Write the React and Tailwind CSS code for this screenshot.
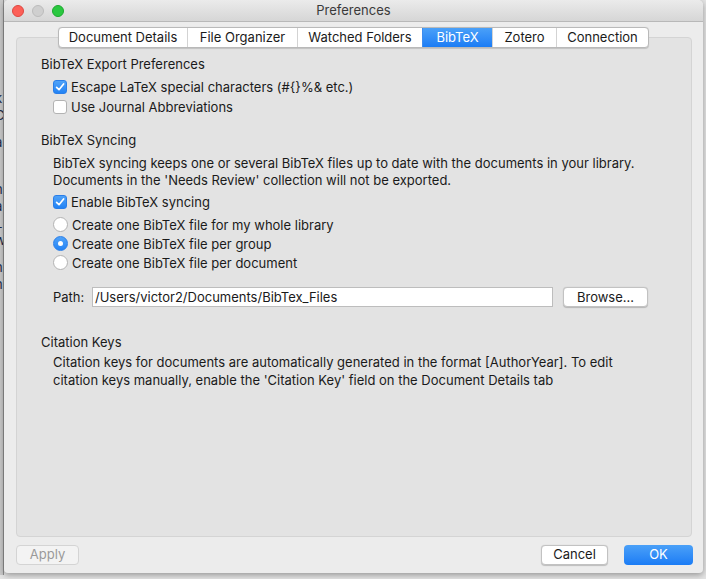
import React from 'react';

const tabs = [
  { label: 'Document Details', w: 'w-[128px]' },
  { label: 'File Organizer', w: 'w-[110px]' },
  { label: 'Watched Folders', w: 'w-[125px]' },
  { label: 'BibTeX', w: 'w-[70px]', active: true },
  { label: 'Zotero', w: 'w-[64px]' },
  { label: 'Connection', w: 'w-[92px]' },
];

const Check = ({ checked }) =>
  checked ? (
    <span className="w-[14px] h-[14px] rounded-[3px] bg-gradient-to-b from-[#4fa2f8] to-[#2183f5] border border-[#2a7ee8] flex items-center justify-center shrink-0">
      <svg width="12" height="12" viewBox="0 0 12 12">
        <path d="M2.6 6.3 L5 8.7 L9.6 3" fill="none" stroke="white" strokeWidth="1.7" strokeLinecap="round" strokeLinejoin="round" />
      </svg>
    </span>
  ) : (
    <span className="w-[14px] h-[14px] rounded-[3px] bg-white border border-[#b3b3b3] shrink-0" />
  );

const Radio = ({ checked }) =>
  checked ? (
    <span className="w-[15px] h-[15px] rounded-full bg-gradient-to-b from-[#4fa2f8] to-[#2183f5] border border-[#2a7ee8] flex items-center justify-center shrink-0">
      <span className="w-[5px] h-[5px] rounded-full bg-white" />
    </span>
  ) : (
    <span className="w-[15px] h-[15px] rounded-full bg-white border border-[#b3b3b3] shrink-0" />
  );

const Row = ({ children, className = '' }) => (
  <div className={`flex items-center gap-[4px] pl-[12px] ${className}`}>{children}</div>
);

export default function App() {
  return (
    <div className="w-[706px] h-[579px] bg-[#e4e4e4] flex overflow-hidden text-[13px] text-[#1a1a1a] font-['Inter',sans-serif]">
      {/* background window peeking out on the left */}
      <div className="w-[4px] h-[575px] bg-[#c9c9c9] border-r border-[#8f8f8f] overflow-hidden flex flex-col pt-[90px] text-[#1d2b4a] leading-[17px] -indent-[5px]">
        <span>k</span><span>C</span><span className="mt-[10px]">a</span>
        <span className="mt-[30px]">n</span><span>a</span><span>L</span><span>w</span>
        <span className="mt-[10px]">n</span><span>n</span>
      </div>

      <div className="w-[699px] h-[573px] bg-[#ececec] rounded-t-[5px] rounded-b-[4px] shadow-[0_2px_6px_rgba(0,0,0,0.35)] flex flex-col">
        {/* title bar */}
        <div className="h-[22px] shrink-0 rounded-t-[5px] bg-gradient-to-b from-[#ebebeb] to-[#d6d6d6] border-b border-[#b8b8b8] flex items-center relative">
          <div className="flex items-center gap-[8px] pl-[8px]">
            <span className="w-[12px] h-[12px] rounded-full bg-[#fc5f57] border border-[#de4740]" />
            <span className="w-[12px] h-[12px] rounded-full bg-[#cfcfcf] border border-[#bcbcbc]" />
            <span className="w-[12px] h-[12px] rounded-full bg-[#2ac840] border border-[#1ca82e]" />
          </div>
          <div className="absolute inset-0 flex items-center justify-center text-[#3a3a3a] pointer-events-none">Preferences</div>
        </div>

        {/* tabs */}
        <div className="flex justify-center pt-[5px] relative z-10">
          <div className="flex h-[21px] rounded-[4px] border border-[#b9b9b9] bg-white overflow-hidden shadow-[0_0.5px_1px_rgba(0,0,0,0.15)]">
            {tabs.map((t, i) => (
              <div
                key={t.label}
                className={`${t.w} flex items-center justify-center ${i > 0 ? 'border-l border-[#d3d3d3]' : ''} ${
                  t.active ? 'bg-gradient-to-b from-[#4aa0f8] to-[#1a7cf5] text-white border-l-[#3d8cef]' : 'text-[#1a1a1a]'
                }`}
              >
                {t.label}
              </div>
            ))}
          </div>
        </div>

        {/* tab box */}
        <div className="mr-[11px] ml-[12px] -mt-[11px] h-[500px] rounded-[4px] bg-[#e3e3e3] border border-[#d4d4d4] pl-[24px] pt-[17px] leading-[18px]">
          <div className="h-[18px] flex items-center">BibTeX Export Preferences</div>
          <Row className="h-[20px] mt-[4px]"><Check checked />Escape LaTeX special characters (#{'{}'}%&amp; etc.)</Row>
          <Row className="h-[20px]"><Check />Use Journal Abbreviations</Row>

          <div className="h-[18px] flex items-center mt-[14px]">BibTeX Syncing</div>
          <div className="pl-[12px] mt-[6px] leading-[17px]">
            <div>BibTeX syncing keeps one or several BibTeX files up to date with the documents in your library.</div>
            <div>Documents in the 'Needs Review' collection will not be exported.</div>
          </div>
          <Row className="h-[20px] mt-[3px]"><Check checked />Enable BibTeX syncing</Row>
          <Row className="h-[19px] mt-[3px]"><Radio />Create one BibTeX file for my whole library</Row>
          <Row className="h-[19px]"><Radio checked />Create one BibTeX file per group</Row>
          <Row className="h-[19px]"><Radio />Create one BibTeX file per document</Row>

          <div className="flex items-center h-[20px] mt-[15px] pl-[12px]">
            <span className="w-[39px]">Path:</span>
            <div className="w-[461px] h-[20px] bg-white border border-[#bdbdbd] flex items-center pl-[2px]">/Users/victor2/Documents/BibTex_Files</div>
            <div className="ml-[10px] w-[85px] h-[20px] bg-white rounded-[4px] border border-[#c2c2c2] shadow-[0_0.5px_1px_rgba(0,0,0,0.2)] flex items-center justify-center">Browse...</div>
          </div>

          <div className="h-[18px] flex items-center mt-[26px]">Citation Keys</div>
          <div className="pl-[12px] mt-[2px] leading-[18px]">
            <div>Citation keys for documents are automatically generated in the format [AuthorYear]. To edit</div>
            <div>citation keys manually, enable the 'Citation Key' field on the Document Details tab</div>
          </div>
        </div>

        {/* bottom buttons */}
        <div className="flex items-center mt-[8px] pl-[12px] pr-[10px]">
          <div className="w-[63px] h-[20px] rounded-[4px] bg-[#f3f3f3] border border-[#d4d4d4] text-[#9a9a9a] flex items-center justify-center">Apply</div>
          <div className="flex-1" />
          <div className="w-[67px] h-[20px] rounded-[4px] bg-white border border-[#c2c2c2] shadow-[0_0.5px_1px_rgba(0,0,0,0.2)] flex items-center justify-center">Cancel</div>
          <div className="ml-[16px] w-[69px] h-[20px] rounded-[4px] bg-gradient-to-b from-[#4aa0f8] to-[#1a7cf5] text-white flex items-center justify-center">OK</div>
        </div>
      </div>
    </div>
  );
}
